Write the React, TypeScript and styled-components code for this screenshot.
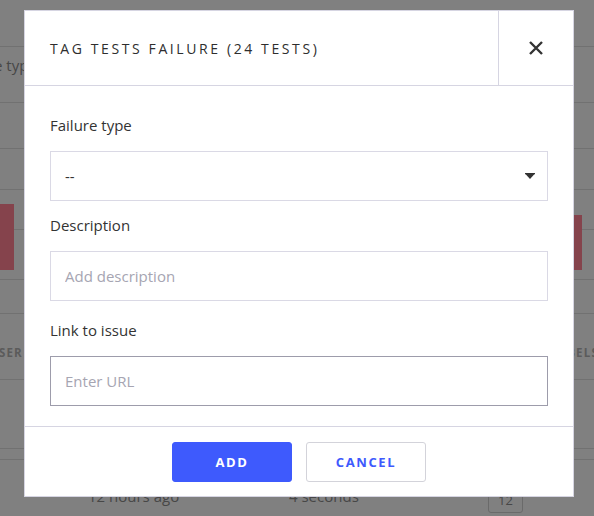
import React from "react";
import styled, { createGlobalStyle } from "styled-components";

const GlobalStyle = createGlobalStyle`
  html, body {
    margin: 0;
    padding: 0;
    width: 594px;
    height: 516px;
    overflow: hidden;
    background: #808080;
    font-family: "Open Sans", "Liberation Sans", sans-serif;
  }
  * { box-sizing: border-box; }
`;

/* ---------- dimmed page behind the dialog ---------- */

const Page = styled.div`
  display: flex;
  flex-direction: column;
  width: 594px;
  height: 516px;
  overflow: hidden;
  background: #808080;
`;

const BgRow = styled.div<{ $h: number }>`
  flex: 0 0 ${(p) => p.$h}px;
  display: flex;
  align-items: flex-start;
  justify-content: space-between;
  border-bottom: 1px solid #717171;
`;

const BgText = styled.span<{ $shift?: number; $pad?: number }>`
  margin-left: ${(p) => p.$shift ?? 0}px;
  padding-top: ${(p) => p.$pad ?? 0}px;
  font-size: 15px;
  color: #474747;
  white-space: nowrap;
`;

const BgCaps = styled.span<{ $shift?: number; $pad?: number; $right?: number }>`
  margin-left: ${(p) => p.$shift ?? 0}px;
  margin-right: ${(p) => p.$right ?? 0}px;
  padding-top: ${(p) => p.$pad ?? 0}px;
  font-size: 11.5px;
  font-weight: 700;
  letter-spacing: 1.2px;
  color: #5b5b5b;
  white-space: nowrap;
`;

const BarGroup = styled.div<{ $reverse?: boolean }>`
  display: flex;
  flex-direction: ${(p) => (p.$reverse ? "row-reverse" : "row")};
  align-items: flex-start;
`;

const RedBar = styled.div<{ $w: number; $top: number; $h: number }>`
  width: ${(p) => p.$w}px;
  height: ${(p) => p.$h}px;
  margin-top: ${(p) => p.$top}px;
  background: #85434c;
`;

const SubLine = styled.div<{ $w: number }>`
  width: ${(p) => p.$w}px;
  height: 40px;
  border-bottom: 1px solid #717171;
`;

const BottomRow = styled.div`
  display: flex;
  align-items: flex-start;
  padding-left: 88px;
  font-size: 15px;
  color: #474747;
`;

const BgCell = styled.span<{ $w: number }>`
  width: ${(p) => p.$w}px;
  padding-top: 26px;
  line-height: 20px;
  white-space: nowrap;
`;

const BgBadge = styled.span`
  display: inline-flex;
  align-items: center;
  justify-content: center;
  margin-top: 27px;
  width: 35px;
  height: 26px;
  border: 1px solid #6a6a6a;
  border-radius: 3px;
  font-size: 13px;
  color: #474747;
`;

/* ---------- dialog ---------- */

const Backdrop = styled.div`
  position: fixed;
  inset: 0;
  display: flex;
  justify-content: center;
  align-items: flex-start;
  padding: 10px 0 0 4px;
`;

const Modal = styled.div`
  width: 550px;
  display: flex;
  flex-direction: column;
  background: #ffffff;
  border: 1px solid #d6d5e2;
`;

const Header = styled.div`
  display: flex;
  height: 75px;
  border-bottom: 1px solid #d6d5e2;
`;

const Title = styled.h2`
  flex: 1;
  margin: 0;
  display: flex;
  align-items: center;
  padding-left: 25px;
  font-size: 14px;
  font-weight: 400;
  letter-spacing: 2.6px;
  color: #2e2e2e;
`;

const CloseButton = styled.button`
  flex: 0 0 75px;
  display: flex;
  align-items: center;
  justify-content: center;
  border: none;
  border-left: 1px solid #d6d5e2;
  background: transparent;
  padding: 0;
  cursor: pointer;
`;

const Body = styled.div`
  display: flex;
  flex-direction: column;
  padding: 29px 25px 20px;
`;

const Field = styled.div<{ $after?: number }>`
  display: flex;
  flex-direction: column;
  margin-bottom: ${(p) => p.$after ?? 0}px;
`;

const Label = styled.label`
  height: 20px;
  line-height: 20px;
  margin-bottom: 16px;
  font-size: 15px;
  color: #333333;
`;

const SelectBox = styled.div`
  height: 50px;
  display: flex;
  align-items: center;
  justify-content: space-between;
  padding: 0 12px 0 14px;
  border: 1px solid #dad9e5;
  font-size: 15px;
  color: #333333;
`;

const TextInput = styled.input<{ $active?: boolean }>`
  height: 50px;
  padding: 0 14px;
  border: 1px solid ${(p) => (p.$active ? "#9d9cab" : "#dad9e5")};
  border-radius: 0;
  outline: none;
  font-family: "Open Sans", "Liberation Sans", sans-serif;
  font-size: 15px;
  color: #333333;
  &::placeholder {
    color: #a6a5b2;
  }
`;

const Footer = styled.div`
  display: flex;
  justify-content: center;
  gap: 14px;
  padding: 15px 0 14px;
  border-top: 1px solid #d6d5e2;
`;

const Button = styled.button<{ $primary?: boolean }>`
  width: 120px;
  height: 40px;
  border-radius: 3px;
  border: 1px solid ${(p) => (p.$primary ? "#3e5afd" : "#d3d3da")};
  background: ${(p) => (p.$primary ? "#3e5afd" : "#ffffff")};
  color: ${(p) => (p.$primary ? "#ffffff" : "#3e5afd")};
  font-family: "Open Sans", "Liberation Sans", sans-serif;
  font-size: 13px;
  font-weight: 700;
  letter-spacing: 1.6px;
  cursor: pointer;
`;

const Caret = () => (
  <svg width="10" height="6" viewBox="0 0 10 6" aria-hidden="true">
    <rect x="0" y="0" width="10" height="1.2" fill="#333" />
    <path d="M0 0.6 L10 0.6 L5 6 Z" fill="#333" />
  </svg>
);

const CloseIcon = () => (
  <svg width="16" height="16" viewBox="0 0 16 16" aria-hidden="true">
    <path d="M2 2 L14 14 M14 2 L2 14" stroke="#333" strokeWidth="2.4" strokeLinecap="butt" />
  </svg>
);

export default function App() {
  return (
    <>
      <GlobalStyle />
      <Page>
        <BgRow $h={47} />
        <BgRow $h={56}>
          <BgText $shift={-45} $pad={8}>Failure type</BgText>
        </BgRow>
        <BgRow $h={46} />
        <BgRow $h={41} />
        <BgRow $h={90}>
          <BarGroup>
            <RedBar $w={14} $top={14} $h={66} />
            <SubLine $w={12} />
          </BarGroup>
          <BarGroup $reverse>
            <SubLine $w={12} />
            <RedBar $w={8} $top={25} $h={55} />
          </BarGroup>
        </BgRow>
        <BgRow $h={34} />
        <BgRow $h={66}>
          <BgCaps $shift={-11} $pad={31}>USER</BgCaps>
          <BgCaps $pad={31} $right={-5}>LABELS</BgCaps>
        </BgRow>
        <BgRow $h={69} />
        <BgRow $h={11} />
        <BottomRow>
          <BgCell $w={201}>12 hours ago</BgCell>
          <BgCell $w={199}>4 seconds</BgCell>
          <BgBadge>12</BgBadge>
        </BottomRow>
      </Page>
      <Backdrop>
        <Modal role="dialog" aria-modal="true">
          <Header>
            <Title>TAG TESTS FAILURE (24 TESTS)</Title>
            <CloseButton aria-label="Close">
              <CloseIcon />
            </CloseButton>
          </Header>
          <Body>
            <Field $after={14}>
              <Label>Failure type</Label>
              <SelectBox>
                <span>--</span>
                <Caret />
              </SelectBox>
            </Field>
            <Field $after={19}>
              <Label>Description</Label>
              <TextInput placeholder="Add description" />
            </Field>
            <Field>
              <Label>Link to issue</Label>
              <TextInput $active placeholder="Enter URL" />
            </Field>
          </Body>
          <Footer>
            <Button $primary>ADD</Button>
            <Button>CANCEL</Button>
          </Footer>
        </Modal>
      </Backdrop>
    </>
  );
}
